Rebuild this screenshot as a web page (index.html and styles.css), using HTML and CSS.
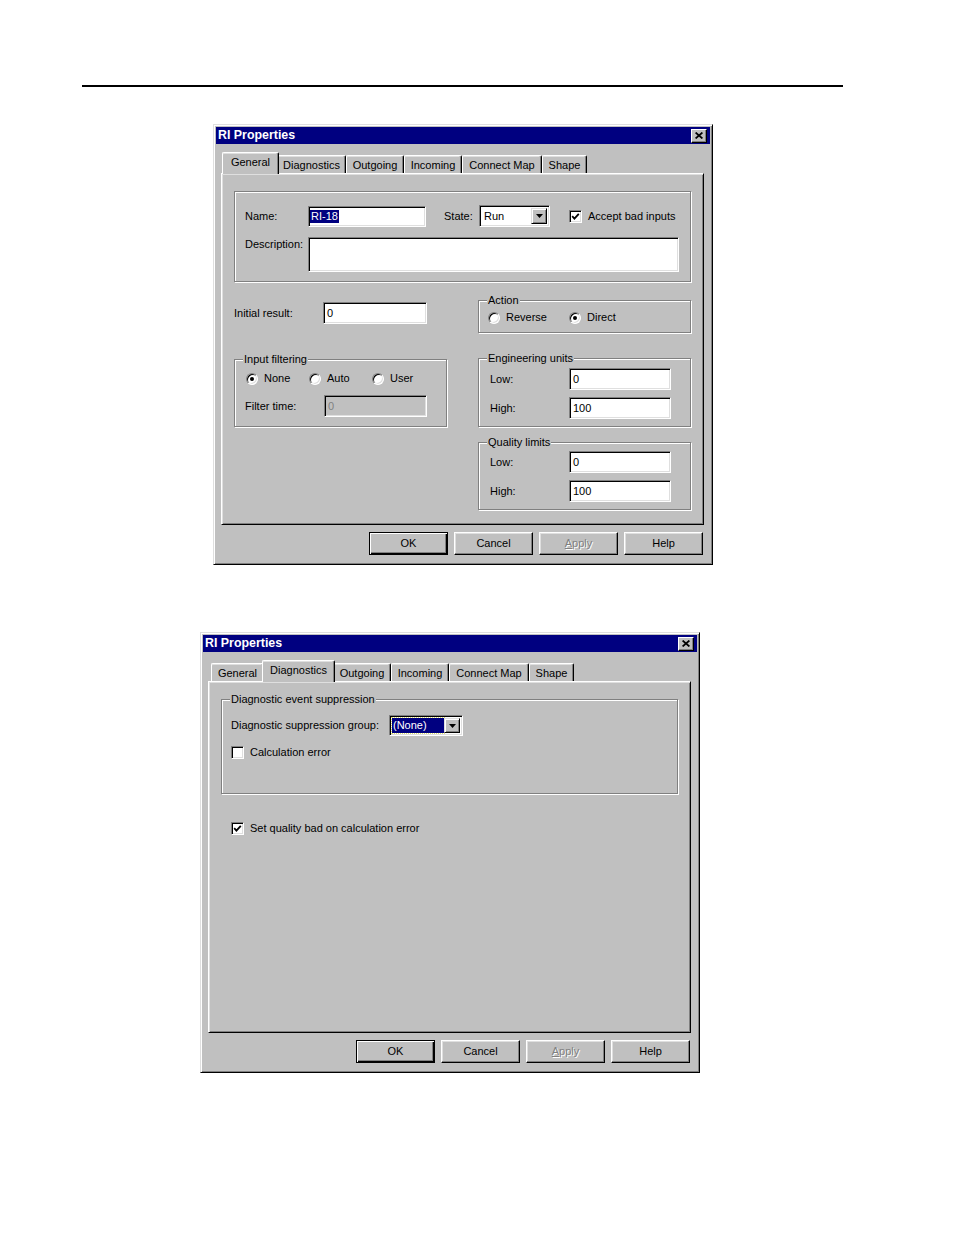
FILE: index.html
```html
<!DOCTYPE html>
<html>
<head>
<meta charset="utf-8">
<title>RI Properties</title>
<link rel="stylesheet" href="styles.css">
</head>
<body>
<div class="rule"></div>

<div class="dialog d1">
  <div class="titlebar">
    <span class="title">RI Properties</span>
    <span class="close"><svg width="8" height="7" viewBox="0 0 8 7"><path d="M0.6 0.5 L7.4 6.5 M7.4 0.5 L0.6 6.5" stroke="#000" stroke-width="1.7" fill="none"/></svg></span>
  </div>
  <div class="tabs">
    <div class="tab t-gen sel">General</div>
    <div class="tab t-diag">Diagnostics</div>
    <div class="tab t-out">Outgoing</div>
    <div class="tab t-in">Incoming</div>
    <div class="tab t-map">Connect Map</div>
    <div class="tab t-shape">Shape</div>
  </div>
  <div class="panel">
    <div class="group g-top">
      <div class="row r-name">
        <span class="lbl w-name">Name:</span>
        <span class="field f-name"><span class="hl">RI-18</span></span>
        <span class="lbl w-state">State:</span>
        <span class="combo c-state"><span class="combo-text">Run</span><span class="drop"><svg width="7" height="4" viewBox="0 0 7 4"><polygon points="0,0 7,0 3.5,4" fill="#000"/></svg></span></span>
        <span class="check on c-accept"><svg width="9" height="9" viewBox="0 0 9 9"><polyline points="1.2,4.2 3.4,6.6 7.8,1.8" fill="none" stroke="#000" stroke-width="1.8"/></svg></span>
        <span class="lbl check-lbl">Accept bad inputs</span>
      </div>
      <div class="row r-desc">
        <span class="lbl w-name desc-lbl">Description:</span>
        <span class="field f-desc"></span>
      </div>
    </div>

    <div class="cols">
      <div class="col">
        <div class="row r-init">
          <span class="lbl w-init">Initial result:</span>
          <span class="field f-init">0</span>
        </div>
        <div class="group g-filter">
          <span class="cap">Input filtering</span>
          <div class="radios">
            <span class="ritem w63"><span class="radio on"></span><span class="lbl">None</span></span>
            <span class="ritem w63"><span class="radio"></span><span class="lbl">Auto</span></span>
            <span class="ritem"><span class="radio"></span><span class="lbl">User</span></span>
          </div>
          <div class="row r-ftime">
            <span class="lbl w-ftime">Filter time:</span>
            <span class="field f-ftime dis">0</span>
          </div>
        </div>
      </div>

      <div class="col">
        <div class="group g-action">
          <span class="cap">Action</span>
          <div class="radios">
            <span class="ritem w81"><span class="radio"></span><span class="lbl">Reverse</span></span>
            <span class="ritem"><span class="radio on"></span><span class="lbl">Direct</span></span>
          </div>
        </div>
        <div class="group g-eng">
          <span class="cap">Engineering units</span>
          <div class="row r-lim">
            <span class="lbl w-lim">Low:</span>
            <span class="field f-lim">0</span>
          </div>
          <div class="row r-lim r-high">
            <span class="lbl w-lim">High:</span>
            <span class="field f-lim">100</span>
          </div>
        </div>
        <div class="group g-qual">
          <span class="cap">Quality limits</span>
          <div class="row r-lim">
            <span class="lbl w-lim">Low:</span>
            <span class="field f-lim">0</span>
          </div>
          <div class="row r-lim r-high">
            <span class="lbl w-lim">High:</span>
            <span class="field f-lim">100</span>
          </div>
        </div>
      </div>
    </div>
  </div>
  <div class="buttons">
    <span class="btn default">OK</span>
    <span class="btn">Cancel</span>
    <span class="btn disabled"><u>A</u>pply</span>
    <span class="btn">Help</span>
  </div>
</div>

<div class="dialog d2">
  <div class="titlebar">
    <span class="title">RI Properties</span>
    <span class="close"><svg width="8" height="7" viewBox="0 0 8 7"><path d="M0.6 0.5 L7.4 6.5 M7.4 0.5 L0.6 6.5" stroke="#000" stroke-width="1.7" fill="none"/></svg></span>
  </div>
  <div class="tabs">
    <div class="tab t-gen">General</div>
    <div class="tab t-diag sel">Diagnostics</div>
    <div class="tab t-out">Outgoing</div>
    <div class="tab t-in">Incoming</div>
    <div class="tab t-map">Connect Map</div>
    <div class="tab t-shape">Shape</div>
  </div>
  <div class="panel">
    <div class="group g-diag">
      <span class="cap">Diagnostic event suppression</span>
      <div class="row r-supp">
        <span class="lbl w-supp">Diagnostic suppression group:</span>
        <span class="combo c-supp"><span class="combo-text"><span class="hl focus">(None)</span></span><span class="drop"><svg width="7" height="4" viewBox="0 0 7 4"><polygon points="0,0 7,0 3.5,4" fill="#000"/></svg></span></span>
      </div>
      <div class="row r-calc">
        <span class="check"></span>
        <span class="lbl check-lbl">Calculation error</span>
      </div>
    </div>
    <div class="row r-setq">
      <span class="check on"><svg width="9" height="9" viewBox="0 0 9 9"><polyline points="1.2,4.2 3.4,6.6 7.8,1.8" fill="none" stroke="#000" stroke-width="1.8"/></svg></span>
      <span class="lbl check-lbl">Set quality bad on calculation error</span>
    </div>
  </div>
  <div class="buttons">
    <span class="btn default">OK</span>
    <span class="btn">Cancel</span>
    <span class="btn disabled"><u>A</u>pply</span>
    <span class="btn">Help</span>
  </div>
</div>
</body>
</html>
```

FILE: styles.css
```css
html, body {
  margin: 0;
  padding: 0;
  background: #fff;
}

body {
  font-family: "Liberation Sans", Arial, sans-serif;
  font-size: 11px;
  color: #000;
}

.rule {
  margin: 85px 0 0 82px;
  width: 761px;
  height: 2px;
  background: #000;
}

/* ---------- dialog frame ---------- */
.dialog {
  box-sizing: border-box;
  width: 500px;
  padding: 2px;
  background: #c0c0c0;
  border: 1px solid;
  border-color: #dfdfdf #000 #000 #dfdfdf;
  box-shadow: inset 1px 1px #fff, inset -1px -1px #808080;
  line-height: 13px;
}

.d1 { margin: 37px 0 0 213px; }
.d2 { margin: 67px 0 0 200px; }

.titlebar {
  height: 17px;
  background: #000080;
  display: flex;
  align-items: center;
  justify-content: space-between;
  padding: 0 3px 0 2px;
}

.title {
  color: #fff;
  font-weight: bold;
  font-size: 12.4px;
  line-height: 17px;
}

.close {
  box-sizing: border-box;
  width: 16px;
  height: 14px;
  background: #c0c0c0;
  border: 1px solid;
  border-color: #fff #000 #000 #fff;
  box-shadow: inset -1px -1px #808080;
  display: flex;
  align-items: center;
  justify-content: center;
  padding-right: 1px;
}

/* ---------- tabs ---------- */
.tabs {
  display: flex;
  align-items: flex-end;
  height: 21px;
  margin-top: 8px;
  padding-left: 8px;
}

.tab {
  box-sizing: border-box;
  width: var(--w);
  flex: none;
  height: 18px;
  padding: 0;
  text-align: center;
  line-height: 18px;
  border-top: 1px solid #fff;
  border-left: 1px solid #fff;
  border-right: 1px solid #000;
  border-radius: 2px 2px 0 0;
  box-shadow: inset -1px 0 #808080, inset 0 1px #dfdfdf;
  background: #c0c0c0;
  white-space: nowrap;
}

.t-gen { --w: 53px; }
.t-diag { --w: 69px; }
.t-out { --w: 58px; }
.t-in { --w: 58px; }
.t-map { --w: 80px; }
.t-shape { --w: 45px; }

.tab.sel {
  width: calc(var(--w) + 4px);
  height: 22px;
  margin: 0 -2px -1px -2px;
  padding-bottom: 4px;
  position: relative;
  z-index: 1;
}

/* ---------- tab page ---------- */
.panel {
  box-sizing: border-box;
  height: 352px;
  margin: 0 6px 0 5px;
  padding: 17px 12px 0 12px;
  border: 1px solid;
  border-color: #fff #000 #000 #fff;
  box-shadow: inset 1px 1px #dfdfdf, inset -1px -1px #808080;
}

.row {
  display: flex;
  align-items: center;
}

.lbl {
  white-space: nowrap;
}

/* ---------- group boxes ---------- */
.group {
  box-sizing: border-box;
  position: relative;
  border: 1px solid #808080;
  box-shadow: inset 1px 1px #fff, 1px 1px #fff;
}

.cap {
  position: absolute;
  top: -7px;
  left: 8px;
  padding: 0 1px;
  background: #c0c0c0;
  line-height: 13px;
  white-space: nowrap;
}

/* ---------- inputs ---------- */
.field {
  box-sizing: border-box;
  display: flex;
  align-items: center;
  height: 22px;
  padding-left: 3px;
  background: #fff;
  border: 1px solid;
  border-color: #808080 #fff #fff #808080;
  box-shadow: inset 1px 1px #000, inset -1px -1px #dfdfdf;
}

.field.dis {
  background: #c0c0c0;
  color: #808080;
}

.hl {
  background: #000080;
  color: #fff;
  padding: 0 1px;
  line-height: 13px;
}

.hl.focus {
  outline: 1px dotted #e0e070;
  outline-offset: 0;
  padding: 1px 17px 1px 1px;
}

.combo {
  box-sizing: border-box;
  display: flex;
  align-items: stretch;
  padding: 2px;
  background: #fff;
  border: 1px solid;
  border-color: #808080 #fff #fff #808080;
  box-shadow: inset 1px 1px #000, inset -1px -1px #dfdfdf;
}

.combo-text {
  flex: 1;
  display: flex;
  align-items: center;
  padding-left: 1px;
}

.drop {
  box-sizing: border-box;
  width: 16px;
  background: #c0c0c0;
  border: 1px solid;
  border-color: #dfdfdf #000 #000 #dfdfdf;
  box-shadow: inset 1px 1px #fff, inset -1px -1px #808080;
  display: flex;
  align-items: center;
  justify-content: center;
}

.check {
  box-sizing: border-box;
  width: 13px;
  height: 13px;
  flex: none;
  background: #fff;
  border: 1px solid;
  border-color: #808080 #fff #fff #808080;
  box-shadow: inset 1px 1px #000, inset -1px -1px #dfdfdf;
  display: flex;
  align-items: center;
  justify-content: center;
}

.check-lbl {
  margin-left: 6px;
}

.radio {
  box-sizing: border-box;
  width: 12px;
  height: 12px;
  flex: none;
  border-radius: 50%;
  background: #fff;
  border: 1px solid;
  border-color: #808080 #fff #fff #808080;
  box-shadow: inset 1px 1px #000, inset -1px -1px #dfdfdf;
  display: flex;
  align-items: center;
  justify-content: center;
}

.radio.on::after {
  content: "";
  width: 4px;
  height: 4px;
  border-radius: 50%;
  background: #000;
}

.radios {
  display: flex;
  align-items: center;
}

.ritem {
  display: flex;
  align-items: center;
  gap: 6px;
}

.w63 { width: 63px; }
.w81 { width: 81px; }

/* ---------- General page ---------- */
.g-top {
  width: 457px;
  height: 91px;
  padding: 13px 0 0 10px;
}

.r-name { height: 22px; }
.w-name { width: 63px; }
.f-name { width: 118px; height: 21px; padding-left: 1px; }
.w-state { width: 35px; margin-left: 18px; }
.c-state { width: 71px; height: 22px; }
.c-state .combo-text { padding-left: 2px; }
.c-accept { margin-left: 19px; }

.r-desc {
  margin-top: 10px;
  align-items: flex-start;
}
.desc-lbl { padding-top: 1px; }
.f-desc { width: 371px; height: 35px; }

.cols {
  display: grid;
  grid-template-columns: 213px 213px;
  column-gap: 31px;
  margin-top: 18px;
  align-items: start;
}

.r-init { margin-top: 2px; }
.w-init { width: 89px; }
.f-init { width: 104px; }

.g-filter {
  margin-top: 35px;
  height: 68px;
  padding: 12px 0 0 10px;
}
.g-filter .radios { padding-left: 1px; }
.r-ftime { margin-top: 10px; }
.w-ftime { width: 79px; }
.f-ftime { width: 103px; }

.g-action {
  height: 33px;
  padding: 10px 0 0 9px;
}

.g-eng {
  margin-top: 25px;
  height: 69px;
  padding: 9px 0 0 11px;
}

.g-qual {
  margin-top: 15px;
  height: 68px;
  padding: 8px 0 0 11px;
}

.w-lim { width: 79px; }
.f-lim { width: 102px; }
.r-high { margin-top: 7px; }

/* ---------- Diagnostics page ---------- */
.g-diag {
  width: 457px;
  height: 95px;
  padding: 15px 0 0 9px;
}

.w-supp { width: 158px; }
.c-supp { width: 74px; height: 21px; }
.c-supp .combo-text { padding-left: 0; }

.r-calc { margin-top: 10px; }

.r-setq {
  margin: 28px 0 0 10px;
}

/* ---------- buttons ---------- */
.buttons {
  display: flex;
  justify-content: flex-end;
  gap: 6px;
  margin: 7px 0 7px 0;
  padding-right: 7px;
}

.btn {
  box-sizing: border-box;
  width: 79px;
  height: 23px;
  display: flex;
  align-items: center;
  justify-content: center;
  background: #c0c0c0;
  border: 1px solid;
  border-color: #fff #000 #000 #fff;
  box-shadow: inset -1px -1px #808080, inset 1px 1px #dfdfdf;
}

.btn.default {
  border-color: #000;
  box-shadow: inset 1px 1px #fff, inset -1px -1px #000, inset -2px -2px #808080;
}

.btn.disabled {
  color: #808080;
  text-shadow: 1px 1px #fff;
}
```
